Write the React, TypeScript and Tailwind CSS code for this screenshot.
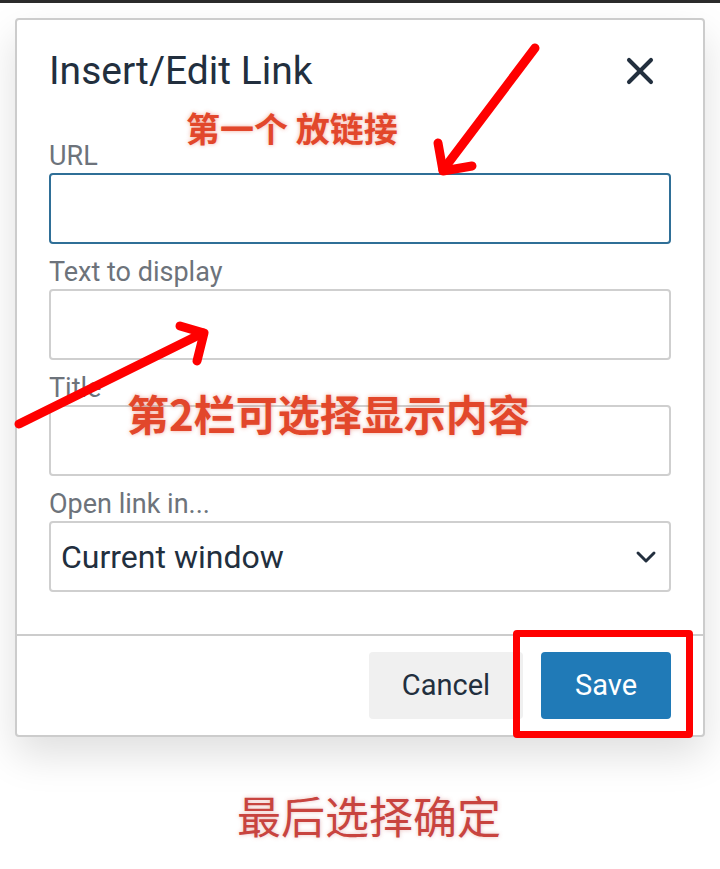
import { X, ChevronDown } from "lucide-react";

const ui = { fontFamily: "Roboto, 'Liberation Sans', sans-serif" };
const cjk = { fontFamily: "'Noto Sans CJK SC', 'Noto Sans', sans-serif" };

function Field({ label, focused }: { label: string; focused?: boolean }) {
  return (
    <div className="flex flex-col">
      <label className="text-[27px] leading-[34px] text-[#6d737b]">{label}</label>
      <div
        className={
          focused
            ? "h-[71px] rounded-[4px] border-2 border-[#2f6f97] bg-white"
            : "h-[71px] rounded-[4px] border-2 border-[#cfcfcf] bg-white"
        }
      />
    </div>
  );
}

export default function App() {
  return (
    <div className="relative w-[720px] h-[869px] overflow-hidden bg-white" style={ui}>
      <div className="h-[3px] bg-[#2b2b2b]" />

      <div className="mt-[15px] mx-[15px] w-[690px] h-[719px] flex flex-col rounded-[4px] border-2 border-[#cccccc] bg-white shadow-[0_18px_40px_rgba(0,0,0,0.13)]">
        <div className="h-[102px] px-[32px] flex items-center justify-between">
          <h1 className="text-[39px] leading-[48px] text-[#222f3e]">Insert/Edit Link</h1>
          <X className="w-[44px] h-[44px] text-[#222f3e] mr-[9px]" strokeWidth={2.2} />
        </div>

        <div className="px-[32px] pt-[17px] pb-[42px] flex flex-col gap-[11px]">
          <Field label="URL" focused />
          <Field label="Text to display" />
          <Field label="Title" />
          <div className="flex flex-col">
            <label className="text-[27px] leading-[34px] text-[#6d737b]">Open link in...</label>
            <div className="h-[71px] rounded-[4px] border-2 border-[#cfcfcf] bg-white flex items-center justify-between pl-[10px] pr-[7px]">
              <span className="text-[32px] text-[#222f3e]">Current window</span>
              <ChevronDown className="w-[32px] h-[32px] text-[#222f3e]" strokeWidth={2.2} />
            </div>
          </div>
        </div>

        <div className="flex-1 border-t-2 border-[#cccccc] px-[32px] flex items-center justify-end gap-[18px]">
          <button className="w-[154px] h-[67px] rounded-[4px] bg-[#f0f0f0] text-[29px] text-[#222f3e]">
            Cancel
          </button>
          <button className="w-[130px] h-[67px] rounded-[4px] bg-[#207ab7] text-[29px] text-white">
            Save
          </button>
        </div>
      </div>

      <p
        className="mt-[52px] pl-[18px] text-center text-[44px] leading-[52px] text-[#c8443f] [text-shadow:0_0_4px_rgba(200,68,63,0.35)]"
        style={cjk}
      >
        最后选择确定
      </p>

      {/* annotations drawn over the screenshot */}
      <div
        className="absolute left-[186px] top-[104px] text-[34px] leading-[48px] font-bold text-[#e2472b] [text-shadow:0_0_4px_rgba(226,71,43,0.45)]"
        style={cjk}
      >
        第一个 放链接
      </div>
      <div
        className="absolute left-[127px] top-[387px] text-[42px] leading-[52px] font-bold text-[#e2472b] [text-shadow:0_0_4px_rgba(226,71,43,0.45)]"
        style={cjk}
      >
        第2栏可选择显示内容
      </div>

      <div className="absolute left-[513px] top-[630px] w-[180px] h-[108px] rounded-[4px] border-[7px] border-[#ff0000]" />

      <svg className="absolute left-0 top-0" width="720" height="869" viewBox="0 0 720 869">
        <g stroke="#ff0000" strokeWidth="9" strokeLinecap="round" strokeLinejoin="round" fill="none">
          <path d="M535 48 L443 170" />
          <path d="M438 143 L443 171 L472 166" />
          <path d="M19 424 L203 333" />
          <path d="M180 326 L204 333 L197 361" />
        </g>
      </svg>
    </div>
  );
}
